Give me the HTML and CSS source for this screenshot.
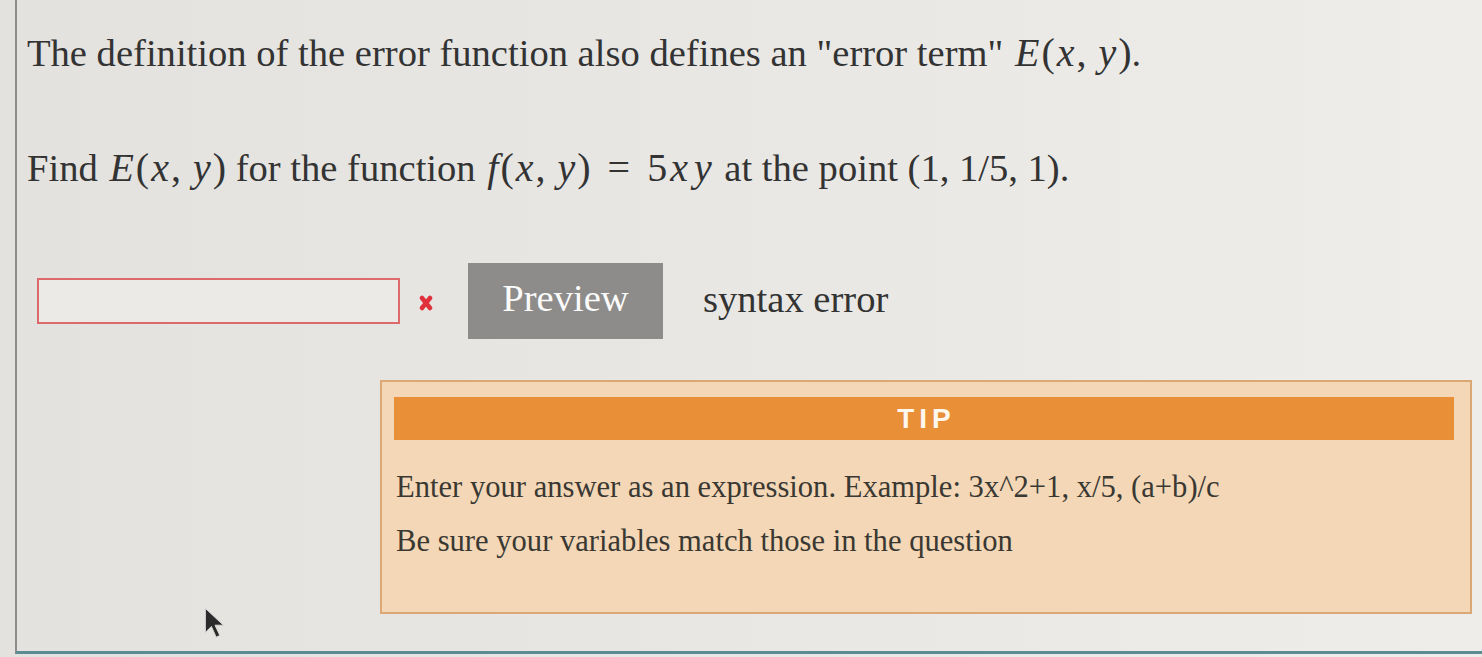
FILE: index.html
```html
<!DOCTYPE html>
<html lang="en">
<head>
    <meta charset="utf-8">
    <title>Error term question</title>
    <link rel="stylesheet" href="styles.css">
</head>
<body>
    <div class="page">
        <p class="question first">The definition of the error function also defines an "error term" <span class="math"><i>E</i>(<i>x</i>, <i>y</i>)</span>.</p>
        <p class="question">Find <span class="math"><i>E</i>(<i>x</i>, <i>y</i>)</span> for the function <span class="math"><i>f</i>(<i>x</i>, <i>y</i>)<span class="eq">=</span>5<i>x</i><i>y</i></span> at the point (1, 1/5, 1).</p>

        <div class="answer-row">
            <input type="text" class="answer-input">
            <svg class="wrong-mark" width="14" height="16" viewBox="0 0 14 16">
                <path d="M3 3 L11 13 M11 3 L3 13" stroke="#e0303c" stroke-width="4.5" stroke-linecap="round"/>
            </svg>
            <button class="preview-btn">Preview</button>
            <span class="feedback">syntax error</span>
        </div>

        <div class="tip-box">
            <div class="tip-header">TIP</div>
            <p class="tip-text">Enter your answer as an expression. Example: 3x^2+1, x/5, (a+b)/c</p>
            <p class="tip-text">Be sure your variables match those in the question</p>
        </div>

        <!-- mouse pointer sitting over the page -->
        <svg class="cursor" width="24" height="36" viewBox="0 0 20 28">
            <path d="M2 1 L2 21 L7 16 L11 25 L14 23.5 L10 15 L17 15 Z" fill="#2b2b2b" stroke="#d8d8d8" stroke-width="0.8"/>
        </svg>
    </div>
</body>
</html>
```

FILE: styles.css
```css
/* page background, like a slightly grey screen */
body {
    margin: 0;
    background: linear-gradient(90deg, #e3e2df 0%, #e8e7e4 50%, #eeedea 100%);
    font-family: "Liberation Serif", "Times New Roman", serif;
    color: #333333;
    overflow: hidden;
}

/* frame with the grey left edge and teal bottom line */
.page {
    position: relative;
    margin-left: 15px;
    height: 654px;
    border-left: 2px solid #8c8c8c;
    border-bottom: 3px solid #5b8b93;
    padding-left: 10px;
    box-sizing: border-box;
}

.question {
    margin: 0;
    font-size: 38.6px;
    line-height: 44px;
}

.question.first {
    padding-top: 31px;
}

.question + .question {
    margin-top: 71px;
}

/* math bits, spaced out like typeset formulas */
.math {
    font-size: 40px;
}

.math i {
    font-style: italic;
    padding: 0 2px;
}

.math .eq {
    margin: 0 17px;
}

.math .eq ~ i {
    padding: 0 3px;
}

/* input, red cross, preview button and feedback */
.answer-row {
    display: flex;
    align-items: center;
    margin-top: 73px;
    margin-left: 10px;
}

.answer-input {
    width: 363px;
    height: 46px;
    box-sizing: border-box;
    border: 2px solid #dc6a6a;
    background: #eceae7;
    margin: 0;
}

.wrong-mark {
    margin-left: 19px;
    margin-top: 4px;
}

.preview-btn {
    width: 195px;
    height: 76px;
    margin-left: 35px;
    border: none;
    background: #8d8c8a;
    color: #fbfbfb;
    font-family: "Liberation Serif", "Times New Roman", serif;
    font-size: 38.6px;
    padding: 0 0 6px 0;
}

.feedback {
    font-size: 38.6px;
    margin-left: 40px;
    margin-top: -4px;
}

/* tip box */
.tip-box {
    width: 1092px;
    height: 234px;
    box-sizing: border-box;
    margin-top: 41px;
    margin-left: 353px;
    background: #f3d7b6;
    border: 2px solid #dba774;
    padding: 15px 16px 0 12px;
}

.tip-header {
    height: 43px;
    background: #e88f38;
    color: #fff7ee;
    font-family: "Liberation Sans", Arial, sans-serif;
    font-weight: bold;
    font-size: 28px;
    letter-spacing: 5px;
    line-height: 43px;
    text-align: center;
    padding-left: 5px;
}

.tip-text {
    margin: 0;
    font-size: 30.6px;
    line-height: 34px;
    color: #3a3833;
    padding-left: 2px;
}

.tip-header + .tip-text {
    margin-top: 30px;
}

.tip-text + .tip-text {
    margin-top: 20px;
}

.cursor {
    position: absolute;
    left: 186px;
    top: 606px;
}
```
